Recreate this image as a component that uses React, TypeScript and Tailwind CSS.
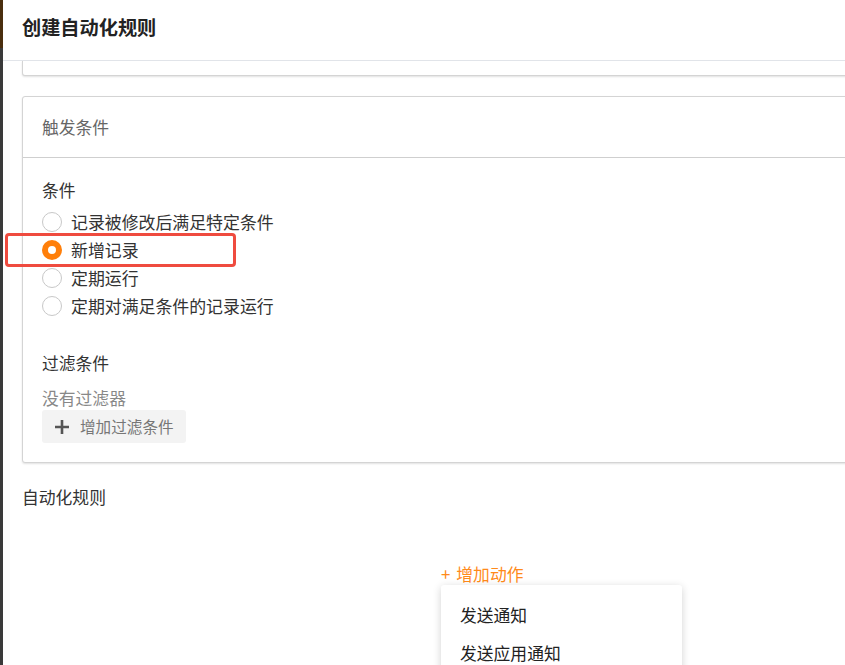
import React from "react";

const font = { fontFamily: '"Noto Sans CJK SC", "Noto Sans", sans-serif' };

function Radio({ label, checked }: { label: string; checked?: boolean }) {
  return (
    <div className="flex items-center h-[28px]">
      {checked ? (
        <span className="w-[20px] h-[20px] rounded-full border-[6px] border-[#ff7f0a] bg-white box-border" />
      ) : (
        <span className="w-[20px] h-[20px] rounded-full border border-[#c8c8c8] bg-white box-border" />
      )}
      <span className="ml-[9px] text-[16.9px] text-[#333] leading-none">{label}</span>
    </div>
  );
}

export default function App() {
  return (
    <div className="relative w-[845px] h-[665px] overflow-hidden bg-white flex" style={font}>
      <div className="w-[3px] flex flex-col shrink-0">
        <div className="h-[48px] bg-[#4a2e0e]" />
        <div className="flex-1 bg-[#3a3a3a]" />
      </div>
      <div className="flex-1 flex flex-col min-w-0">
        <div className="h-[61px] shrink-0 border-b border-[#e2e5ea] flex items-center pl-[19px] pb-[6px]">
          <span className="text-[19.2px] font-bold text-[#222]">创建自动化规则</span>
        </div>
        <div className="pl-[19px] flex flex-col">
          <div className="w-[840px] h-[15px] bg-white border-x border-b border-[#d4d4d4] rounded-b-[3px] shadow-[0_1px_2px_rgba(0,0,0,0.12)]" />
          <div className="mt-[20px] w-[840px] h-[367px] bg-white border border-[#d4d4d4] rounded-[3px] shadow-[0_1px_2px_rgba(0,0,0,0.12)] flex flex-col">
            <div className="h-[61px] border-b border-[#cfcfcf] flex items-center pl-[19px] pt-[2px]">
              <span className="text-[16.8px] text-[#666]">触发条件</span>
            </div>
            <div className="pl-[19px] pt-[20px] flex flex-col">
              <div className="text-[16.8px] text-[#333] h-[24px] leading-[24px]">条件</div>
              <div className="mt-[6px] flex flex-col">
                <Radio label="记录被修改后满足特定条件" />
                <Radio label="新增记录" checked />
                <Radio label="定期运行" />
                <Radio label="定期对满足条件的记录运行" />
              </div>
              <div className="mt-[31px] text-[16.8px] text-[#333] h-[24px] leading-[24px]">过滤条件</div>
              <div className="mt-[11px] text-[16.8px] text-[#888] h-[24px] leading-[24px]">没有过滤器</div>
              <div>
                <div className="inline-flex items-center h-[33px] px-[12px] bg-[#f3f3f3] rounded-[3px]">
                  <svg width="16" height="16" viewBox="0 0 16 16">
                    <path d="M8 1v14M1 8h14" stroke="#555" strokeWidth="2.6" />
                  </svg>
                  <span className="ml-[10px] text-[15.6px] text-[#777]">增加过滤条件</span>
                </div>
              </div>
            </div>
          </div>
          <div className="mt-[22px] text-[16.8px] text-[#333] h-[24px] leading-[24px]">自动化规则</div>
          <div className="mt-[53px] pl-[419px] relative">
            <div className="text-[16.8px] text-[#ff8a1a] h-[24px] leading-[24px] flex items-center">
              <span className="mr-[6px]">+</span>
              <span>增加动作</span>
            </div>
            <div className="absolute left-[419px] top-[23px] w-[241px] h-[120px] bg-white rounded-[3px] shadow-[0_2px_8px_rgba(0,0,0,0.18)] flex flex-col pt-[18px] pl-[19px]">
              <div className="h-[38px] text-[16.8px] text-[#222] leading-[24px]">发送通知</div>
              <div className="h-[38px] text-[16.8px] text-[#222] leading-[24px]">发送应用通知</div>
            </div>
          </div>
        </div>
      </div>
      <div className="absolute left-[5px] top-[233px] w-[231px] h-[34px] border-[3px] border-[#ef4b3f] rounded-[4px]" />
    </div>
  );
}
